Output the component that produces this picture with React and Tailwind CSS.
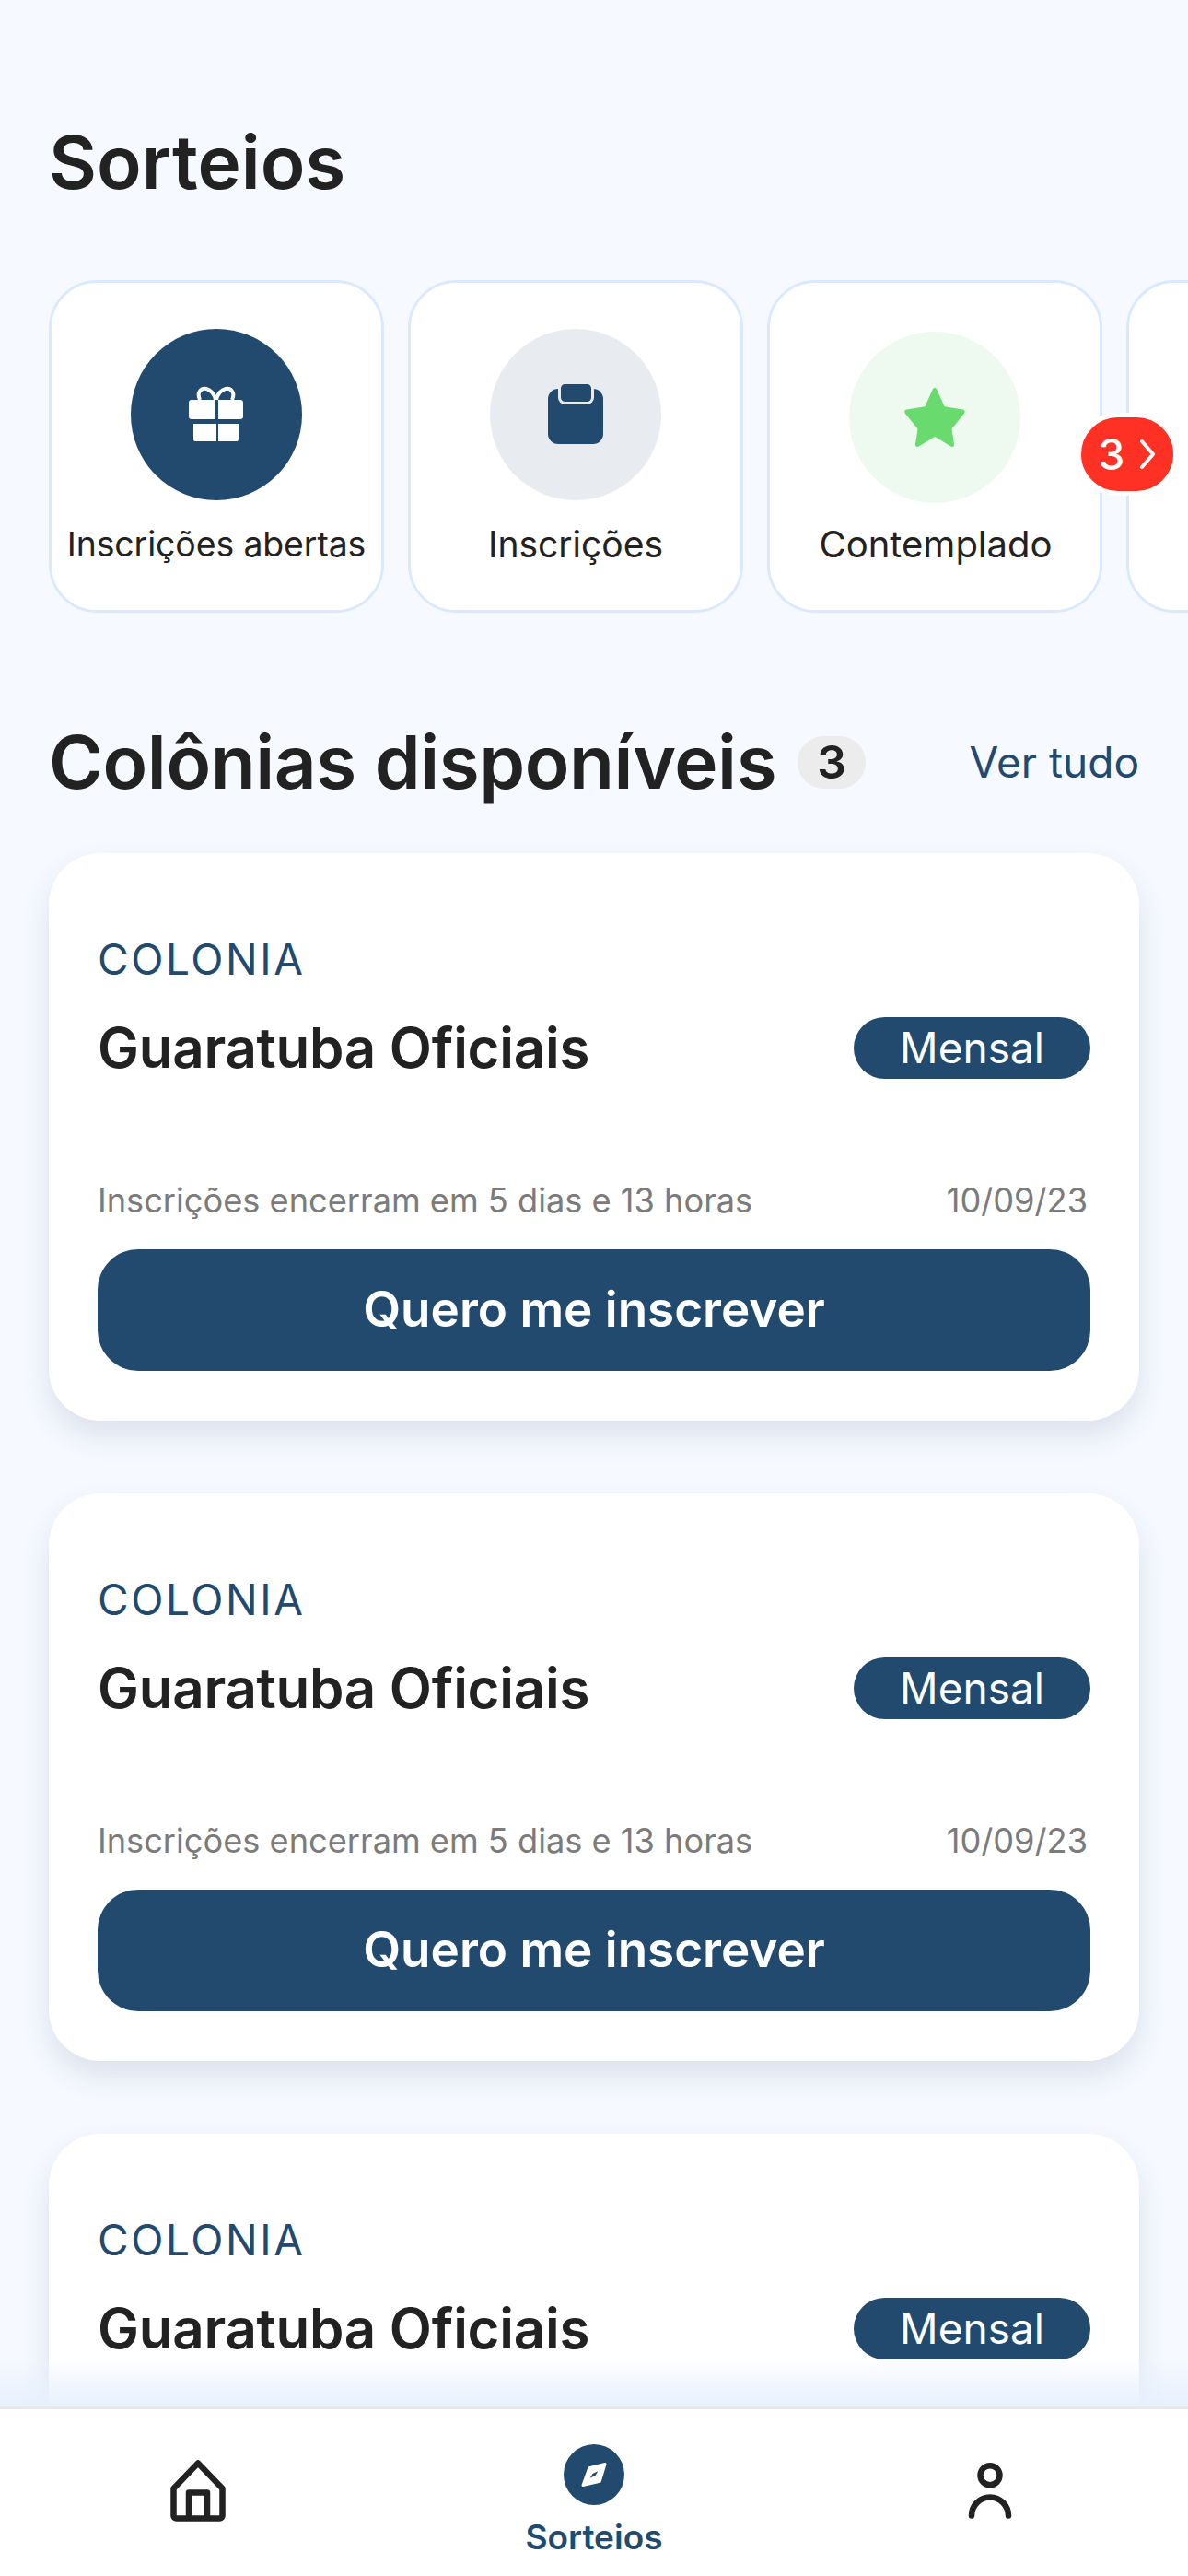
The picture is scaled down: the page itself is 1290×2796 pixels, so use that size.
import React from 'react';

const GiftIcon = () => (
    <svg width="90" height="90" viewBox="0 0 90 90" fill="none">
        <path d="M27 29c-4-9 2-13 7-12 5 1 9 6 10 12M62 29c4-9-2-13-7-12-5 1-9 6-10 12" stroke="#fff" strokeWidth="4" />
        <path d="M18 29h26v21H18a3 3 0 0 1-3-3V32a3 3 0 0 1 3-3ZM47 29h24a3 3 0 0 1 3 3v15a3 3 0 0 1-3 3H47V29Z" fill="#fff" />
        <path d="M20 55h25v19H22a2 2 0 0 1-2-2V55ZM47 55h22v17a2 2 0 0 1-2 2H47V55Z" fill="#fff" />
    </svg>
);

const ClipboardIcon = () => (
    <svg width="90" height="90" viewBox="0 0 90 90" fill="none">
        <rect x="15" y="17" width="60" height="60" rx="11" fill="#224a6e" />
        <rect x="27.500" y="10.500" width="36" height="22" rx="6" fill="#224a6e" stroke="#e8ecf1" strokeWidth="3" />
    </svg>
);

const StarIcon = () => (
    <svg width="68" height="66" viewBox="0 0 68 66">
        <path d="M34 2c1 0 1.800.6 2.200 1.500l8.300 18.800 20 3.300c2 .3 2.800 2.600 1.500 4.100L52.500 46.500l2.500 16.800c.3 2-1.900 3.400-3.600 2.300L34 55 16.600 65.600c-1.700 1.100-3.900-.3-3.600-2.300l2.500-16.800L1.900 29.700C.6 28.200 1.400 25.900 3.400 25.600l20-3.300 8.400-18.800C32.200 2.600 33 2 34 2Z" fill="#69db6e" transform="translate(0 -1)" />
    </svg>
);

const categories = [
    { label: 'Inscrições abertas', circle: 'bg-[#224a6e] mt-[50px]', text: 'mt-[23px] text-[37.400px] tracking-[-0.1px]', icon: <GiftIcon /> },
    { label: 'Inscrições', circle: 'bg-[#e8ecf1] mt-[50px]', text: 'mt-[23px] text-[39px]', icon: <ClipboardIcon /> },
    { label: 'Contemplado', circle: 'bg-[#eefaf0] mt-[53px]', text: 'mt-[20px] ml-[2px] text-[40px]', icon: <StarIcon /> },
];

const CategoryCard = ({ label, circle, text, icon }) => (
    <div className="w-[364px] h-[361px] shrink-0 rounded-[52px] border-[3px] border-[#dbe9ff] bg-white flex flex-col items-center">
        <div className={`w-[186px] h-[186px] rounded-full flex items-center justify-center ${circle}`}>
            {icon}
        </div>
        <div className={`h-[50px] leading-[50px] text-[#222222] whitespace-nowrap ${text}`}>{label}</div>
    </div>
);

// the last card runs under the nav, its footer is never on screen
const ColonyCard = ({ showFooter = true }) => (
    <div className="h-[616px] shrink-0 rounded-[56px] bg-white shadow-[0_16px_32px_rgba(30,60,100,0.12)] px-[53px] pt-[88px]">
        <div className="text-[46px] leading-[54px] tracking-[2.6px] text-[#224a6e]">COLONIA</div>
        <div className="mt-[33px] flex items-center justify-between">
            <div className="text-[60px] leading-[72px] font-semibold tracking-[-0.25px] text-[#222222]">Guaratuba Oficiais</div>
            <div className="w-[257px] h-[67px] rounded-full bg-[#224a6e] text-white text-[46px] leading-[67px] text-center">Mensal</div>
        </div>
        {showFooter && (
            <>
                <div className="mt-[107px] flex items-center justify-between text-[36.200px] leading-[46px] text-[#7b7b7b]">
                    <span>Inscrições encerram em 5 dias e 13 horas</span>
                    <span className="mr-[3px]">10/09/23</span>
                </div>
                <button className="mt-[30px] w-full h-[132px] rounded-[44px] bg-[#224a6e] text-white text-[53px] font-semibold">
                    Quero me inscrever
                </button>
            </>
        )}
    </div>
);

export default function App() {
    return (
        <div className="relative w-[1290px] h-[2796px] overflow-hidden bg-[#f6f9ff] flex flex-col font-['Inter',sans-serif]">
            <div className="relative flex-1 overflow-hidden">
                <h1 className="mt-[128px] ml-[53px] text-[80px] leading-[96px] font-semibold text-[#222222]">Sorteios</h1>

                <div className="mt-[80px] flex gap-[26px] pl-[53px]">
                    {categories.map((c) => (
                        <CategoryCard key={c.label} {...c} />
                    ))}
                    <div className="w-[364px] h-[361px] shrink-0 rounded-[52px] border-[3px] border-[#dbe9ff] bg-white" />
                </div>

                <div className="absolute left-[1169px] top-[448px] w-[110px] h-[90px] rounded-full border-[5px] border-white bg-[#ff3024] flex items-center justify-center gap-[16px]">
                    <span className="text-[46px] font-medium text-white leading-none">3</span>
                    <svg width="18" height="34" viewBox="0 0 18 34" fill="none">
                        <path d="M3 3l12 14L3 31" stroke="#fff" strokeWidth="4" strokeLinecap="round" strokeLinejoin="round" />
                    </svg>
                </div>

                <div className="mt-[110px] mx-[53px] flex items-center h-[104px]">
                    <h2 className="text-[80px] leading-[96px] font-semibold tracking-[-0.4px] text-[#222222]">Colônias disponíveis</h2>
                    <div className="ml-[23px] w-[74px] h-[57px] rounded-full bg-[#ececec] text-[50px] font-semibold leading-[57px] text-center text-[#222222]">3</div>
                    <div className="ml-auto text-[46px] text-[#224a6e]">Ver tudo</div>
                </div>

                <div className="mt-[47px] mx-[53px] flex flex-col gap-[79px]">
                    <ColonyCard />
                    <ColonyCard />
                    <ColonyCard showFooter={false} />
                </div>

                <div className="absolute inset-x-0 bottom-0 h-[52px] bg-gradient-to-b from-[#e6f0fd00] to-[#e6f0fd]" />
            </div>

            <nav className="h-[184px] shrink-0 border-t-[3px] border-[#e8e8e8] bg-white grid grid-cols-3">
                <div className="flex justify-center pt-[24px]">
                    <svg width="110" height="110" viewBox="0 0 110 110" fill="none">
                        <path d="M28.500 62 55 34.500 81.500 62v29.500a3 3 0 0 1-3 3h-47a3 3 0 0 1-3-3V62Z" stroke="#222222" strokeWidth="6.500" strokeLinejoin="round" />
                        <path d="M45 93V66.500h20V93" stroke="#222222" strokeWidth="6.500" strokeLinejoin="round" />
                    </svg>
                </div>
                <div className="flex flex-col items-center pt-[38px]">
                    <svg width="66" height="66" viewBox="0 0 66 66">
                        <circle cx="33" cy="33" r="33" fill="#224a6e" />
                        <path d="M27.800 25.800 45 21.500 39.300 40.300 21 44.500Z" fill="#fff" stroke="#fff" strokeWidth="3" strokeLinejoin="round" />
                        <path d="M28.700 36.700 31.500 32 37.300 29.300 34.500 34Z" fill="#224a6e" />
                    </svg>
                    <div className="mt-[13px] text-[37px] leading-[44px] font-semibold text-[#224a6e]">Sorteios</div>
                </div>
                <div className="flex justify-center pt-[35px]">
                    <svg width="110" height="110" viewBox="0 0 110 110" fill="none">
                        <circle cx="55" cy="36.700" r="10.500" stroke="#222222" strokeWidth="6.500" />
                        <path d="M35 80.500a20 20 0 0 1 40 0" stroke="#222222" strokeWidth="6.500" strokeLinecap="round" />
                    </svg>
                </div>
            </nav>
        </div>
    );
}
